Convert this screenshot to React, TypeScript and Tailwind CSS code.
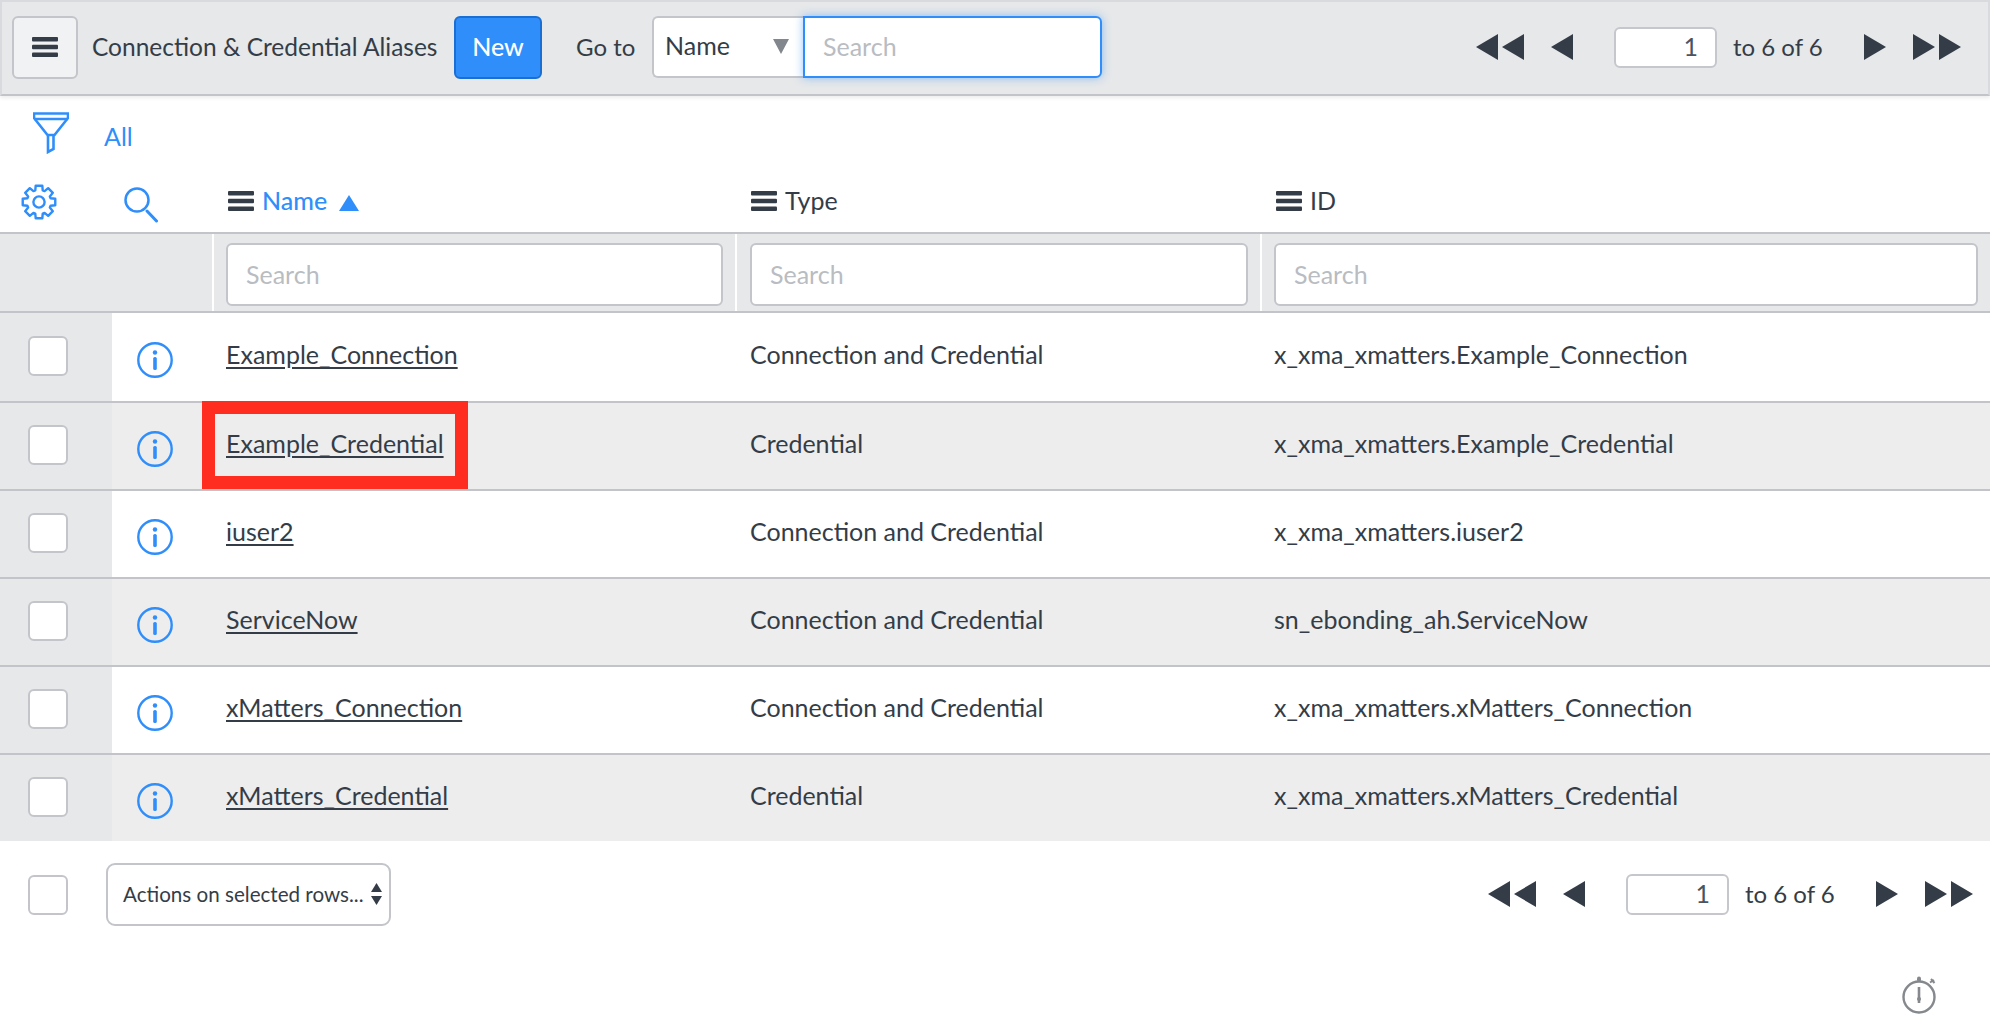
const rows = [
  { name: 'Example_Connection', type: 'Connection and Credential', id: 'x_xma_xmatters.Example_Connection' },
  { name: 'Example_Credential', type: 'Credential', id: 'x_xma_xmatters.Example_Credential', marked: true },
  { name: 'iuser2', type: 'Connection and Credential', id: 'x_xma_xmatters.iuser2' },
  { name: 'ServiceNow', type: 'Connection and Credential', id: 'sn_ebonding_ah.ServiceNow' },
  { name: 'xMatters_Connection', type: 'Connection and Credential', id: 'x_xma_xmatters.xMatters_Connection' },
  { name: 'xMatters_Credential', type: 'Credential', id: 'x_xma_xmatters.xMatters_Credential' },
]

const gridCols = 'grid grid-cols-[112px_102px_523px_525px_1fr]'

// outline of an 8 tooth cog, centred on 18,18
function cogPath() {
  const pts: string[] = []
  for (let i = 0; i < 8; i++) {
    const a = (i * Math.PI) / 4 - Math.PI / 2
    const step = [
      [-0.31, 12.2],
      [-0.2, 16.6],
      [0.2, 16.6],
      [0.31, 12.2],
    ]
    step.forEach(([d, r]) => {
      pts.push(`${(18 + r * Math.cos(a + d)).toFixed(2)},${(18 + r * Math.sin(a + d)).toFixed(2)}`)
    })
  }
  return pts.join(' ')
}

function Hamburger() {
  return (
    <svg width="26" height="20" viewBox="0 0 26 20" className="text-[#343d47]" fill="currentColor">
      <rect y="0" width="26" height="4.5" rx="1" />
      <rect y="7.7" width="26" height="4.5" rx="1" />
      <rect y="15.5" width="26" height="4.5" rx="1" />
    </svg>
  )
}

function Arrows({ dir, count }: { dir: 'left' | 'right'; count: number }) {
  const w = count === 2 ? 48 : 22
  const points = []
  for (let i = 0; i < count; i++) {
    const x = i * 26
    points.push(dir === 'left' ? `${x},13 ${x + 22},0 ${x + 22},26` : `${x},0 ${x + 22},13 ${x},26`)
  }
  return (
    <svg width={w} height="26" viewBox={`0 0 ${w} 26`} className="text-[#343d47]" fill="currentColor">
      {points.map((p) => (
        <polygon key={p} points={p} />
      ))}
    </svg>
  )
}

function Pager() {
  return (
    <div className="flex items-center text-[#343d47]">
      <Arrows dir="left" count={2} />
      <div className="ml-[27px]">
        <Arrows dir="left" count={1} />
      </div>
      <div className="ml-[41px] w-[103px] h-[41px] bg-white border-2 border-[#c5c7cc] rounded-[6px] flex items-center justify-end pr-[17px] text-[25px] text-[#4a5460]">
        1
      </div>
      <span className="ml-[16px] w-[91px] whitespace-nowrap text-[24px]">to 6 of 6</span>
      <div className="ml-[40px]">
        <Arrows dir="right" count={1} />
      </div>
      <div className="ml-[27px]">
        <Arrows dir="right" count={2} />
      </div>
    </div>
  )
}

function Checkbox() {
  return <div className="w-[40px] h-[40px] bg-white border-2 border-[#c3c5ca] rounded-[6px]" />
}

function InfoIcon() {
  return (
    <svg width="36" height="36" viewBox="0 0 36 36" fill="none" className="text-[#2f8efa]">
      <circle cx="18" cy="18" r="16.7" stroke="currentColor" strokeWidth="2.4" />
      <circle cx="18" cy="10.5" r="2.2" fill="currentColor" />
      <rect x="16.2" y="15" width="3.6" height="13" rx="1.6" fill="currentColor" />
    </svg>
  )
}

function FilterInput() {
  return (
    <div className="h-[63px] bg-white border-2 border-[#c3c5ca] rounded-[6px] flex items-center pl-[18px] text-[25px] text-[#b9bcc1]">
      Search
    </div>
  )
}

function HeadCell({ label, active }: { label: string; active?: boolean }) {
  return (
    <div className="flex items-center h-full pl-[14px] pt-[4px]">
      <Hamburger />
      <span className={`ml-[8px] text-[25px] ${active ? 'text-[#2f8efa] font-medium' : 'text-[#343d47]'}`}>{label}</span>
      {active && (
        <svg width="20" height="16" viewBox="0 0 20 16" className="ml-[12px] mt-[4px] text-[#2f8efa]" fill="currentColor">
          <polygon points="10,0 20,16 0,16" />
        </svg>
      )}
    </div>
  )
}

export default function App() {
  return (
    <div className="w-[1990px] h-[1034px] bg-white text-[#343d47] overflow-hidden font-['Lato','Noto_Sans',sans-serif]">
      {/* Top bar */}
      <div className="h-[96px] bg-[#e6e8ea] border-t-2 border-b-2 border-l-2 border-r-2 border-t-[#d8dade] border-b-[#c2c4c9] border-x-[#d8dade] flex items-center shadow-[0_2px_4px_rgba(0,0,0,0.08)] pr-[27px] pb-[2px]">
        <button className="ml-[10px] w-[66px] h-[63px] bg-[#f1f2f4] border-2 border-[#c3c5ca] rounded-[6px] flex items-center justify-center">
          <Hamburger />
        </button>
        <span className="ml-[14px] text-[24.5px] whitespace-nowrap w-[344px]">Connection &amp; Credential Aliases</span>
        <button className="ml-[18px] w-[88px] h-[63px] bg-[#2f8efa] border-2 border-[#1a6fd4] rounded-[6px] text-white text-[25px] font-medium">
          New
        </button>
        <span className="ml-[34px] w-[76px] text-[24px] whitespace-nowrap">Go to</span>
        <div className="flex h-[62px]">
          <div className="w-[151px] bg-white border-2 border-r-0 border-[#c3c5ca] rounded-l-[6px] flex items-center justify-between pl-[11px] pr-[14px] text-[25px]">
            <span className="-mt-[3px]">Name</span>
            <svg width="16" height="15" viewBox="0 0 16 15" className="text-[#82878d] -mt-[2px]" fill="currentColor">
              <polygon points="0,0 16,0 8,15" />
            </svg>
          </div>
          <div className="w-[299px] bg-white border-2 border-[#2f8efa] rounded-r-[6px] shadow-[0_0_8px_rgba(47,142,250,0.5)] flex items-center pl-[18px] text-[25px] text-[#b9bcc1]">
            Search
          </div>
        </div>
        <div className="ml-auto">
          <Pager />
        </div>
      </div>

      {/* Filter breadcrumb */}
      <div className="h-[70px] flex items-center pl-[33px] pt-[12px]">
        <svg width="36" height="42" viewBox="0 0 36 42" fill="none" stroke="#2f8efa" strokeWidth="2.6" className="-mt-[8px]">
          <path d="M1 1.5 H35 V6 L21.5 23 H14.5 L1 6 Z" />
          <path d="M1 7 H35" />
          <path d="M15 24 V40 L20.5 37 V24" />
        </svg>
        <span className="ml-[35px] text-[25px] text-[#2f8efa]">All</span>
      </div>

      {/* Column headers */}
      <div className={`${gridCols} h-[66px]`}>
        <div className="flex items-center pl-[21px] pt-[6px]">
          <svg width="36" height="36" viewBox="0 0 36 36" fill="none" stroke="#2f8efa" strokeWidth="2.4" strokeLinejoin="round">
            <polygon points={cogPath()} />
            <circle cx="18" cy="18" r="5.6" />
          </svg>
        </div>
        <div className="flex items-center pl-[12px] pt-[11px]">
          <svg width="34" height="36" viewBox="0 0 34 36" fill="none" stroke="#2f8efa" strokeLinecap="round">
            <circle cx="13" cy="13" r="11.5" strokeWidth="2.5" />
            <path d="M23 24 L32.5 34" strokeWidth="3" />
          </svg>
        </div>
        <HeadCell label="Name" active />
        <HeadCell label="Type" />
        <HeadCell label="ID" />
      </div>

      {/* Column filters */}
      <div className={`${gridCols} h-[81px] bg-[#e6e8ea] border-t-2 border-b-2 border-[#c2c4c9]`}>
        <div />
        <div className="border-r-2 border-white" />
        <div className="pl-[12px] pr-[12px] pt-[9px] border-r-2 border-white">
          <FilterInput />
        </div>
        <div className="pl-[13px] pr-[12px] pt-[9px] border-r-2 border-white">
          <FilterInput />
        </div>
        <div className="pl-[12px] pr-[12px] pt-[9px]">
          <FilterInput />
        </div>
      </div>

      {/* Rows */}
      {rows.map((row, i) => (
        <div
          key={row.name}
          className={`${gridCols} h-[88px] ${i > 0 ? 'border-t-2 border-[#c2c4c9]' : ''} ${i % 2 === 1 ? 'bg-[#ededee]' : 'bg-white'} text-[25px]`}
        >
          <div className="bg-[#e6e8ea] flex items-center pl-[28px] pb-[2px]">
            <Checkbox />
          </div>
          <div className="flex items-center pl-[25px] pt-[6px]">
            <InfoIcon />
          </div>
          <div className="relative flex items-center pl-[12px] pb-[4px]">
            <a className="underline underline-offset-[3px] whitespace-nowrap">{row.name}</a>
            {row.marked && <div className="absolute -left-[12px] -top-[2px] w-[266px] h-[88px] border-[13px] border-[#ff2d20]" />}
          </div>
          <div className="flex items-center pl-[13px] pb-[4px] whitespace-nowrap">{row.type}</div>
          <div className="flex items-center pl-[12px] pb-[4px] whitespace-nowrap">{row.id}</div>
        </div>
      ))}

      {/* Footer */}
      <div className="h-[84px] flex items-center pr-[17px] pt-[22px]">
        <div className="ml-[28px] pt-[2px]">
          <Checkbox />
        </div>
        <div className="ml-[38px] w-[285px] h-[63px] bg-white border-2 border-[#c3c5ca] rounded-[9px] flex items-center justify-between pl-[15px] pr-[7px] text-[20.6px] whitespace-nowrap">
          <span>Actions on selected rows...</span>
          <svg width="11" height="22" viewBox="0 0 11 22" className="text-[#343d47]" fill="currentColor">
            <polygon points="5.5,0 11,9 0,9" />
            <polygon points="0,13 11,13 5.5,22" />
          </svg>
        </div>
        <div className="ml-auto">
          <Pager />
        </div>
      </div>

      {/* Timer */}
      <div className="flex justify-end pr-[54px] pt-[51px]">
        <svg width="34" height="38" viewBox="0 0 34 38" fill="none" stroke="#85888c" strokeWidth="2.4">
          <circle cx="17" cy="21" r="15.5" />
          <path d="M17 2.5V4" strokeWidth="4" strokeLinecap="round" />
          <path d="M17 11V27" strokeWidth="2.6" />
          <circle cx="17" cy="23" r="2" fill="#85888c" stroke="none" />
          <path d="M28 6.5 L32 4 M29 3 L32.5 7" strokeWidth="2" />
        </svg>
      </div>
    </div>
  )
}
